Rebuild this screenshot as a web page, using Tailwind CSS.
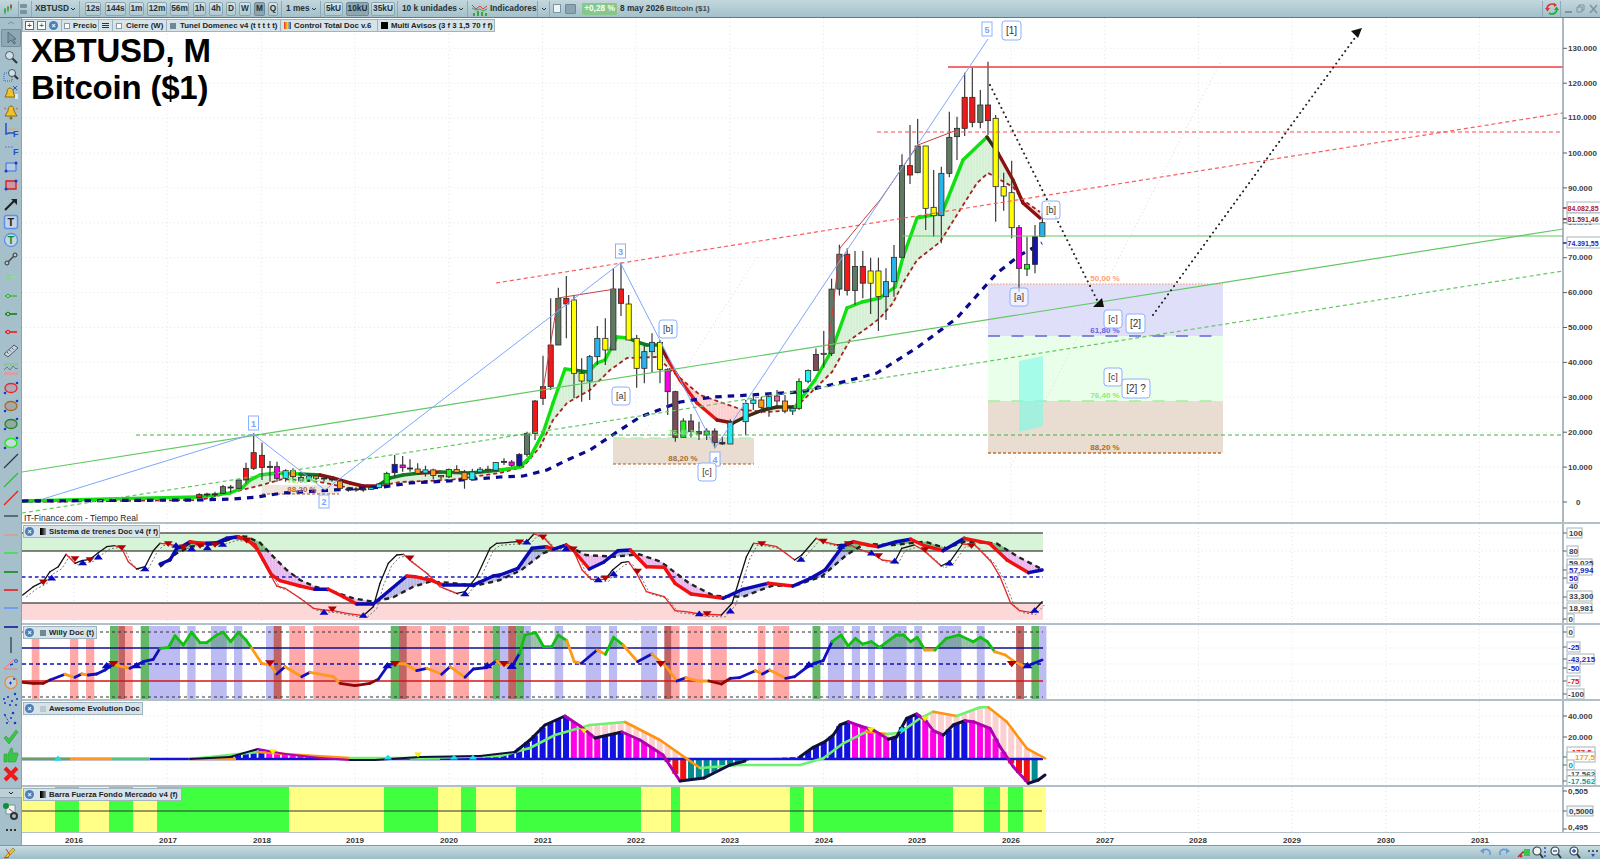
<!DOCTYPE html>
<html lang="es">
<head>
<meta charset="utf-8">
<title>XBTUSD, M</title>
<script src="https://cdn.jsdelivr.net/npm/@tailwindcss/browser@4"></script>
</head>
<body class="w-[1600px] h-[859px] overflow-hidden flex flex-col bg-white font-['Liberation_Sans',sans-serif] text-[#222]">

<!-- top toolbar -->
<header class="h-[18px] shrink-0 flex items-center bg-linear-to-b from-[#c3d7dd] to-[#a3c1cb] border-b border-[#5f7c8a] text-[8.3px] font-bold text-[#26323a] whitespace-nowrap">
  <svg class="ml-[4px] w-[10px] h-[12px]" viewBox="0 0 10 12"><path d="M1 5v6M4 3v6M7 1v6" stroke="#2a9a2a" stroke-width="1"/><path d="M0 6h2v3H0zM3 4h2v3H3z" fill="#3ab03a"/><path d="M6 2h2v3H6z" fill="#d04040"/></svg>
  <i class="w-px h-[16px] bg-[#8da9b5] ml-[4px]"></i>
  <span class="ml-[1px] w-[7px] h-[12px] flex flex-col gap-[2px] justify-center"><b class="block h-[4px] bg-[#7b929e] rounded-[1px]"></b><b class="block h-[4px] bg-[#7b929e] rounded-[1px]"></b></span>
  <i class="w-px h-[16px] bg-[#8da9b5] ml-[4px]"></i>
  <span class="ml-[3px] w-[32px]">XBTUSD</span>
  <svg class="ml-[3px] w-[6px] h-[4px]" viewBox="0 0 6 4"><path d="M1 1l2 2 2-2" fill="none" stroke="#333"/></svg>
  <i class="w-px h-[16px] bg-[#8da9b5] ml-[3px]"></i>
  <span class="ml-[5px] w-[16px] h-[14px] flex items-center justify-center border border-[#89a6b2] rounded-[2px] bg-linear-to-b from-[#d5e4e8] to-[#aec8d1]">12s</span>
  <span class="ml-[4px] w-[21px] h-[14px] flex items-center justify-center border border-[#89a6b2] rounded-[2px] bg-linear-to-b from-[#d5e4e8] to-[#aec8d1]">144s</span>
  <span class="ml-[3px] w-[15px] h-[14px] flex items-center justify-center border border-[#89a6b2] rounded-[2px] bg-linear-to-b from-[#d5e4e8] to-[#aec8d1]">1m</span>
  <span class="ml-[3px] w-[20px] h-[14px] flex items-center justify-center border border-[#89a6b2] rounded-[2px] bg-linear-to-b from-[#d5e4e8] to-[#aec8d1]">12m</span>
  <span class="ml-[3px] w-[19px] h-[14px] flex items-center justify-center border border-[#89a6b2] rounded-[2px] bg-linear-to-b from-[#d5e4e8] to-[#aec8d1]">56m</span>
  <span class="ml-[4px] w-[13px] h-[14px] flex items-center justify-center border border-[#89a6b2] rounded-[2px] bg-linear-to-b from-[#d5e4e8] to-[#aec8d1]">1h</span>
  <span class="ml-[3px] w-[14px] h-[14px] flex items-center justify-center border border-[#89a6b2] rounded-[2px] bg-linear-to-b from-[#d5e4e8] to-[#aec8d1]">4h</span>
  <span class="ml-[3px] w-[10px] h-[14px] flex items-center justify-center border border-[#89a6b2] rounded-[2px] bg-linear-to-b from-[#d5e4e8] to-[#aec8d1]">D</span>
  <span class="ml-[3px] w-[12px] h-[14px] flex items-center justify-center border border-[#89a6b2] rounded-[2px] bg-linear-to-b from-[#d5e4e8] to-[#aec8d1]">W</span>
  <span class="ml-[3px] w-[11px] h-[14px] flex items-center justify-center border border-[#6f8a96] rounded-[2px] bg-[#8ea6b0]">M</span>
  <span class="ml-[3px] w-[10px] h-[14px] flex items-center justify-center border border-[#89a6b2] rounded-[2px] bg-linear-to-b from-[#d5e4e8] to-[#aec8d1]">Q</span>
  <i class="w-px h-[16px] bg-[#8da9b5] ml-[3px]"></i>
  <span class="ml-[4px] w-[21px]">1 mes</span>
  <svg class="ml-[4px] w-[6px] h-[4px]" viewBox="0 0 6 4"><path d="M1 1l2 2 2-2" fill="none" stroke="#333"/></svg>
  <i class="w-px h-[16px] bg-[#8da9b5] ml-[3px]"></i>
  <span class="ml-[3px] w-[19px] h-[14px] flex items-center justify-center border border-[#89a6b2] rounded-[2px] bg-linear-to-b from-[#d5e4e8] to-[#aec8d1]">5kU</span>
  <span class="ml-[3px] w-[23px] h-[14px] flex items-center justify-center border border-[#6f8a96] rounded-[2px] bg-[#8ea6b0]">10kU</span>
  <span class="ml-[2px] w-[24px] h-[14px] flex items-center justify-center border border-[#89a6b2] rounded-[2px] bg-linear-to-b from-[#d5e4e8] to-[#aec8d1]">35kU</span>
  <i class="w-px h-[16px] bg-[#8da9b5] ml-[2px]"></i>
  <span class="ml-[4px] w-[53px]">10 k unidades</span>
  <svg class="ml-[3px] w-[6px] h-[4px]" viewBox="0 0 6 4"><path d="M1 1l2 2 2-2" fill="none" stroke="#333"/></svg>
  <i class="w-px h-[16px] bg-[#8da9b5] ml-[3px]"></i>
  <svg class="ml-[4px] w-[15px] h-[14px]" viewBox="0 0 15 14"><path d="M0 3l4 4 4-3 3 3 4-3" fill="none" stroke="#d04040"/><path d="M0 6l4 2 4-1 3 2 4-2" fill="none" stroke="#40a040"/><path d="M1 11h2v3H1zM5 9h2v5H5zM9 10h2v4H9zM13 11h2v3h-2z" fill="#3aa63a"/></svg>
  <span class="ml-[3px] w-[46px]">Indicadores</span>
  <i class="w-px h-[16px] bg-[#8da9b5] ml-[1px]"></i>
  <svg class="ml-[3px] w-[6px] h-[4px]" viewBox="0 0 6 4"><path d="M1 1l2 2 2-2" fill="none" stroke="#333"/></svg>
  <i class="w-px h-[16px] bg-[#8da9b5] ml-[2px]"></i>
  <span class="ml-[3px] w-[8px] h-[9px] bg-[#eef3f5] border border-[#7d95a1]"></span>
  <span class="ml-[4px] w-[11px] h-[10px] bg-[#8aa4b0] border border-[#6e8894] rounded-[1px]"></span>
  <span class="ml-[6px] w-[35px] h-[12px] flex items-center justify-center bg-[#86c78e] text-[#f6fff6] rounded-[1px]">+0,28 %</span>
  <span class="ml-[3px] w-[38px]">8 may 2026</span>
  <span class="ml-[8px] w-[40px] text-[8px] text-[#3c4c54]">Bitcoin ($1)</span>
  <i class="ml-auto w-px h-[16px] bg-[#8da9b5]"></i>
  <svg class="ml-[2px] w-[14px] h-[14px]" viewBox="0 0 14 14"><path d="M2 7a5 5 0 0 1 8-4" fill="none" stroke="#e03030" stroke-width="1.6"/><path d="M0 6h5L2.500 9.500zM9 1l3 2-3 2z" fill="#e03030"/><path d="M12 7a5 5 0 0 1-8 4" fill="none" stroke="#18b030" stroke-width="1.6"/><path d="M9 8h5l-2.500-3.500z" fill="#18b030"/></svg>
  <i class="ml-[1px] w-px h-[16px] bg-[#8da9b5]"></i>
  <svg class="ml-[3px] w-[36px] h-[12px]" viewBox="0 0 36 12"><path d="M1 9h7" stroke="#7f929b" stroke-width="2"/><path d="M13 4h5v5h-5zM15 4V2h5v5h-2" fill="none" stroke="#7f929b"/><path d="M26 2l7 8M33 2l-7 8" stroke="#7f929b" stroke-width="1.500"/></svg>
</header>

<div class="flex-1 flex min-h-0">
  <!-- left drawing tools -->
  <aside class="w-[22px] shrink-0 bg-[#a5bfcb] border-r border-[#8aa3af] flex flex-col items-center">
    <svg class="w-[8px] h-[11px] shrink-0" viewBox="0 0 8 11"><path d="M1 6l3-2 3 2" fill="none" stroke="#77909c"/></svg>
    <span class="h-[18.400px] w-[20px] shrink-0 flex items-center justify-center bg-[#8fa8b4] border border-[#74909c] rounded-[1px]"><svg class="w-4 h-4" viewBox="0 0 16 16"><path d="M5 2v11l3-3 3 4 1.500-1L10 9.500l3-.5z" fill="#7c98aa" stroke="#586e7c"/></svg></span>
    <span class="h-[18.400px] shrink-0 flex items-center"><svg class="w-4 h-4" viewBox="0 0 16 16"><circle cx="6.500" cy="6.500" r="4" fill="#cfe0e8" stroke="#4a5a64"/><path d="M9.500 9.500L14 14" stroke="#333" stroke-width="2"/></svg></span>
    <span class="h-[18.400px] shrink-0 flex items-center"><svg class="w-4 h-4" viewBox="0 0 16 16"><path d="M1 6h8v8H1z" fill="none" stroke="#3068d0" stroke-dasharray="1 1"/><circle cx="9" cy="6" r="3.500" fill="#cfe0e8" stroke="#4a5a64"/><path d="M11.500 8.500L15 12" stroke="#333" stroke-width="2"/></svg></span>
    <span class="h-[18.400px] shrink-0 flex items-center"><svg class="w-4 h-4" viewBox="0 0 16 16"><path d="M7 3C5 3 4 5 4 8l-2 4h10l-1.500-4c0-3-1.500-5-3.500-5z" fill="#f0c428" stroke="#8a6c10"/><path d="M10 1l4 4M14 1l-4 4" stroke="#2858c8"/><path d="M12 9h3v5h-3z" fill="#dfe8ec"/></svg></span>
    <span class="h-[18.400px] shrink-0 flex items-center"><svg class="w-4 h-4" viewBox="0 0 16 16"><path d="M8 2C6 2 5 4 5 7l-3 5h12l-3-5c0-3-1-5-3-5z" fill="#f0c428" stroke="#8a6c10"/><path d="M1 4l2 1M15 4l-2 1" stroke="#d06020"/><circle cx="8" cy="14" r="1.500" fill="#8a6c10"/></svg></span>
    <span class="h-[18.400px] shrink-0 flex items-center"><svg class="w-4 h-4" viewBox="0 0 16 16"><path d="M3 1v11l3-1h5" fill="none" stroke="#2050c8" stroke-width="1.500"/><path d="M5 7h9" stroke="#e8a060"/><text x="10" y="15" font-size="9" font-weight="700" fill="#2050c8">F</text></svg></span>
    <span class="h-[18.400px] shrink-0 flex items-center"><svg class="w-4 h-4" viewBox="0 0 16 16"><path d="M2 6h9" stroke="#7a90d8" stroke-width="1.500" stroke-dasharray="2 1"/><text x="10" y="14" font-size="9" font-weight="700" fill="#2050c8">F</text></svg></span>
    <span class="h-[18.400px] shrink-0 flex items-center"><svg class="w-4 h-4" viewBox="0 0 16 16"><path d="M3 4h10v8H3z" fill="#b4c8e8" stroke="#3870e0"/><circle cx="13" cy="4" r="1.500" fill="#1838c8"/><circle cx="3" cy="12" r="1.500" fill="#1838c8"/></svg></span>
    <span class="h-[18.400px] shrink-0 flex items-center"><svg class="w-4 h-4" viewBox="0 0 16 16"><path d="M3 4h10v8H3z" fill="#c89aa8" stroke="#e01818" stroke-width="1.300"/><circle cx="13" cy="4" r="1.500" fill="#1838c8"/><circle cx="3" cy="12" r="1.500" fill="#1838c8"/></svg></span>
    <span class="h-[18.400px] shrink-0 flex items-center"><svg class="w-4 h-4" viewBox="0 0 16 16"><path d="M2 14L11 5" stroke="#222" stroke-width="2.200"/><path d="M8 3h6v6z" fill="#222"/></svg></span>
    <span class="h-[18.400px] shrink-0 flex items-center"><svg class="w-4 h-4" viewBox="0 0 16 16"><rect x="1.500" y="1.500" width="13" height="13" rx="2" fill="#c4d4e4" stroke="#5c90e8" stroke-width="1.500"/><text x="4.500" y="12" font-size="11" font-weight="700" fill="#222">T</text></svg></span>
    <span class="h-[18.400px] shrink-0 flex items-center"><svg class="w-4 h-4" viewBox="0 0 16 16"><circle cx="8" cy="8" r="6.500" fill="#c4d8e4" stroke="#5c90e8" stroke-width="1.300"/><text x="4.500" y="12" font-size="11" font-weight="700" fill="#109030">T</text></svg></span>
    <span class="h-[18.400px] shrink-0 flex items-center"><svg class="w-4 h-4" viewBox="0 0 16 16"><path d="M4 12L12 4" stroke="#444" stroke-width="1.500"/><circle cx="4" cy="12" r="2" fill="#b8ccd6" stroke="#333"/><circle cx="12" cy="4" r="2" fill="#b8ccd6" stroke="#333"/></svg></span>
    <span class="h-[18.400px] shrink-0 flex items-center"><svg class="w-4 h-4" viewBox="0 0 16 16"><path d="M2 8h12" stroke="#80e880" stroke-width="1.500"/><circle cx="5" cy="8" r="1.800" fill="#a8d0c0" stroke="#70d870"/></svg></span>
    <span class="h-[18.400px] shrink-0 flex items-center"><svg class="w-4 h-4" viewBox="0 0 16 16"><path d="M2 8h12" stroke="#38c038" stroke-width="1.500"/><circle cx="5" cy="8" r="1.800" fill="#a8d0c0" stroke="#30b030"/></svg></span>
    <span class="h-[18.400px] shrink-0 flex items-center"><svg class="w-4 h-4" viewBox="0 0 16 16"><path d="M2 8h12" stroke="#0c7c0c" stroke-width="1.500"/><circle cx="5" cy="8" r="1.800" fill="#a8d0c0" stroke="#0c7c0c"/></svg></span>
    <span class="h-[18.400px] shrink-0 flex items-center"><svg class="w-4 h-4" viewBox="0 0 16 16"><path d="M2 8h12" stroke="#f01010" stroke-width="1.500"/><circle cx="5" cy="8" r="1.800" fill="#c0b0b8" stroke="#f01010"/></svg></span>
    <span class="h-[18.400px] shrink-0 flex items-center"><svg class="w-4 h-4" viewBox="0 0 16 16"><path d="M1 11L11 2l4 3L5 14z" fill="#c4d2da" stroke="#4c5c66"/><path d="M4 9l1.500 1.500M6.500 7L8 8.500M9 5l1.500 1.500" stroke="#4c5c66"/></svg></span>
    <span class="h-[18.400px] shrink-0 flex items-center"><svg class="w-4 h-4" viewBox="0 0 16 16"><path d="M1 2h14v3H1z" fill="#8ec898"/><path d="M1 11h14v3H1z" fill="#d8a0a4"/><path d="M1 9l3-3 3 3 3-4 3 3 2-1" fill="none" stroke="#647a88"/></svg></span>
    <span class="h-[18.400px] shrink-0 flex items-center"><svg class="w-4 h-4" viewBox="0 0 16 16"><ellipse cx="8" cy="8" rx="6" ry="4.500" fill="#b4a8b4" stroke="#e82828" stroke-width="1.300"/><circle cx="14" cy="3" r="1.300" fill="#1838c8"/><circle cx="2" cy="13" r="1.300" fill="#1838c8"/></svg></span>
    <span class="h-[18.400px] shrink-0 flex items-center"><svg class="w-4 h-4" viewBox="0 0 16 16"><ellipse cx="8" cy="8" rx="6" ry="4.500" fill="#a8a8a0" stroke="#a86828" stroke-width="1.300"/><circle cx="14" cy="3" r="1.300" fill="#1838c8"/><circle cx="2" cy="13" r="1.300" fill="#1838c8"/></svg></span>
    <span class="h-[18.400px] shrink-0 flex items-center"><svg class="w-4 h-4" viewBox="0 0 16 16"><ellipse cx="8" cy="8" rx="6" ry="4.500" fill="#94a8a4" stroke="#208820" stroke-width="1.300"/><circle cx="14" cy="3" r="1.300" fill="#1838c8"/><circle cx="2" cy="13" r="1.300" fill="#1838c8"/></svg></span>
    <span class="h-[18.400px] shrink-0 flex items-center"><svg class="w-4 h-4" viewBox="0 0 16 16"><ellipse cx="8" cy="8" rx="6" ry="4.500" fill="#c8d8dc" stroke="#18f018" stroke-width="1.500"/><circle cx="14" cy="3" r="1.300" fill="#1838c8"/><circle cx="2" cy="13" r="1.300" fill="#1838c8"/></svg></span>
    <span class="h-[18.400px] shrink-0 flex items-center"><svg class="w-4 h-4" viewBox="0 0 16 16"><path d="M1 15L15 1" stroke="#30383e" stroke-width="1.200"/></svg></span>
    <span class="h-[18.400px] shrink-0 flex items-center"><svg class="w-4 h-4" viewBox="0 0 16 16"><path d="M1 15L15 1" stroke="#38b838" stroke-width="1.300"/></svg></span>
    <span class="h-[18.400px] shrink-0 flex items-center"><svg class="w-4 h-4" viewBox="0 0 16 16"><path d="M1 15L15 1" stroke="#f01818" stroke-width="1.300"/></svg></span>
    <span class="h-[18.400px] shrink-0 flex items-center"><svg class="w-4 h-4" viewBox="0 0 16 16"><path d="M1 8h14" stroke="#2c3238" stroke-width="1.200"/></svg></span>
    <span class="h-[18.400px] shrink-0 flex items-center"><svg class="w-4 h-4" viewBox="0 0 16 16"><path d="M1 8h14" stroke="#f09080" stroke-width="1.300"/></svg></span>
    <span class="h-[18.400px] shrink-0 flex items-center"><svg class="w-4 h-4" viewBox="0 0 16 16"><path d="M1 8h14" stroke="#20f020" stroke-width="1.300"/></svg></span>
    <span class="h-[18.400px] shrink-0 flex items-center"><svg class="w-4 h-4" viewBox="0 0 16 16"><path d="M1 8h14" stroke="#0c820c" stroke-width="1.500"/></svg></span>
    <span class="h-[18.400px] shrink-0 flex items-center"><svg class="w-4 h-4" viewBox="0 0 16 16"><path d="M1 8h14" stroke="#f01010" stroke-width="1.500"/></svg></span>
    <span class="h-[18.400px] shrink-0 flex items-center"><svg class="w-4 h-4" viewBox="0 0 16 16"><path d="M1 8h14" stroke="#6090ff" stroke-width="1.500"/></svg></span>
    <span class="h-[18.400px] shrink-0 flex items-center"><svg class="w-4 h-4" viewBox="0 0 16 16"><path d="M1 8h14" stroke="#0c0c98" stroke-width="1.500"/></svg></span>
    <span class="h-[18.400px] shrink-0 flex items-center"><svg class="w-4 h-4" viewBox="0 0 16 16"><path d="M8 0v16" stroke="#2c3238" stroke-width="1.200"/></svg></span>
    <span class="h-[18.400px] shrink-0 flex items-center"><svg class="w-4 h-4" viewBox="0 0 16 16"><path d="M1 14h13M1 14L11 4" stroke="#e88080"/><path d="M7 10l3-1" stroke="#1838c8" stroke-width="1.500"/><circle cx="13" cy="6" r="1.500" fill="none" stroke="#2858c8"/></svg></span>
    <span class="h-[18.400px] shrink-0 flex items-center"><svg class="w-4 h-4" viewBox="0 0 16 16"><circle cx="8" cy="8.500" r="6" fill="#c0ccd4" stroke="#e88a40" stroke-width="1.200"/><path d="M6 9h3M7.500 7.500v3M10 5h2M11 4v2" stroke="#1838c8"/></svg></span>
    <span class="h-[18.400px] shrink-0 flex items-center"><svg class="w-[17px] h-[17px]" viewBox="0 0 17 17" fill="#1838c8"><circle cx="2" cy="7" r="1"/><circle cx="3" cy="11" r="1"/><circle cx="6" cy="5" r="1.100"/><circle cx="8" cy="13" r="1.100"/><circle cx="10" cy="9" r="1"/><circle cx="13" cy="2" r="1.200"/><circle cx="15" cy="7" r="1.100"/><circle cx="14" cy="13" r="1"/></svg></span>
    <span class="h-[18.400px] shrink-0 flex items-center"><svg class="w-[17px] h-[17px]" viewBox="0 0 17 17"><path d="M2 4l5 8" stroke="#1838c8" stroke-dasharray="1 1"/><g fill="#1838c8"><circle cx="3" cy="5" r="1"/><circle cx="11" cy="3" r="1.300"/><circle cx="5" cy="13" r="1.100"/><circle cx="13" cy="13" r="1.300"/><circle cx="9" cy="8" r="1"/></g></svg></span>
    <span class="h-[18.400px] shrink-0 flex items-center"><svg class="w-4 h-4" viewBox="0 0 16 16"><path d="M1 9l2-2 3 3 7-9 2 2-9 12z" fill="#38c848" stroke="#209030" stroke-width=".5"/></svg></span>
    <span class="h-[18.400px] shrink-0 flex items-center"><svg class="w-4 h-4" viewBox="0 0 16 16"><path d="M1 7h3v8H1zM5 7l3-6c2 0 2 2 1 5h5c2 0 1 3 0 4l-1 4c0 1-1 1-2 1H5z" fill="#38c848" stroke="#209030" stroke-width=".5"/></svg></span>
    <span class="h-[18.400px] shrink-0 flex items-center"><svg class="w-4 h-4" viewBox="0 0 16 16"><path d="M2 2l12 12M14 2L2 14" stroke="#f01818" stroke-width="4"/></svg></span>
    <span class="h-[10px] w-[22px] mt-[5px] shrink-0 flex items-center justify-center bg-[#bcd0d8] border-y border-[#8fa7b3]"><svg class="w-[6px] h-[4px]" viewBox="0 0 6 4"><path d="M1 1l2 2 2-2" fill="none" stroke="#222"/></svg></span>
    <span class="h-[18.400px] mt-[4px] shrink-0 flex items-center"><svg class="w-[18px] h-[18px]" viewBox="0 0 18 18"><path d="M4 3h9v9H4z" fill="#eef3f6" stroke="#77909c"/><circle cx="4" cy="4" r="3" fill="#128e32"/><path d="M7 7l6 4" stroke="#d03030"/><circle cx="12" cy="14" r="3" fill="none" stroke="#333" stroke-width="2"/></svg></span>
    <span class="h-[14px] mt-[3px] shrink-0 flex items-center gap-[2px]"><b class="w-[2px] h-[2px] bg-[#333] block"></b><b class="w-[2px] h-[2px] bg-[#333] block"></b><b class="w-[2px] h-[2px] bg-[#333] block"></b></span>
  </aside>

  <!-- chart panes -->
  <main class="flex-1 min-w-0 flex flex-col">
    <section class="relative h-[506px] shrink-0 border-b-2 border-[#b3bfc7]">
      <svg class="absolute inset-0 w-full h-full" viewBox="22 18 1578 504">
        <g id="p1"></g>
        <g class="text-[8px] font-bold" fill="#3a4248">
          <text x="1568" y="51">130.000</text><text x="1568" y="86">120.000</text><text x="1568" y="120">110.000</text><text x="1568" y="156">100.000</text><text x="1568" y="191">90.000</text><text x="1568" y="225">80.000</text><text x="1568" y="260">70.000</text><text x="1568" y="295">60.000</text><text x="1568" y="330">50.000</text><text x="1568" y="365">40.000</text><text x="1568" y="400">30.000</text><text x="1568" y="435">20.000</text><text x="1568" y="470">10.000</text><text x="1576" y="505">0</text>
          <rect x="1567" y="202" width="34" height="11" fill="#fff" stroke="#a4b4bc"/><text x="1567.500" y="211" fill="#b02424" class="text-[7px]">84.082,85</text>
          <rect x="1567" y="213" width="34" height="11" fill="#fff" stroke="#a4b4bc"/><text x="1567.500" y="222" fill="#8c2a18" class="text-[7px]">81.591,46</text>
          <rect x="1567" y="237" width="34" height="11" fill="#fff" stroke="#a4b4bc"/><text x="1567.500" y="246" fill="#2828b8" class="text-[7px]">74.391,55</text>
        </g>
        <g class="text-[8px] font-bold">
          <text x="1105" y="281" text-anchor="middle" fill="#ffa070">50,00 %</text>
          <text x="1105" y="333" text-anchor="middle" fill="#6464e0">61,80 %</text>
          <text x="1105" y="398" text-anchor="middle" fill="#80ee80">76,40 %</text>
          <text x="1105" y="450" text-anchor="middle" fill="#b06a28">88,20 %</text>
          <text x="683" y="435" text-anchor="middle" fill="#80ee80">76,40 %</text>
          <text x="683" y="461" text-anchor="middle" fill="#b06a28">88,20 %</text>
          <text x="302" y="483" text-anchor="middle" fill="#80ee80">76,40 %</text>
          <text x="302" y="492" text-anchor="middle" fill="#b06a28">88,20 %</text>
        </g>
        <g class="text-[9px] font-bold" fill="#78a2ff" text-anchor="middle">
          <rect x="248.500" y="416" width="10" height="14" fill="#fff" stroke="#8cb0ff"/><text x="253.500" y="426.500">1</text>
          <rect x="319" y="495" width="10" height="13" fill="#fff" stroke="#8cb0ff"/><text x="324" y="505">2</text>
          <rect x="615.500" y="244" width="10" height="14" fill="#fff" stroke="#8cb0ff"/><text x="620.500" y="254.500">3</text>
          <rect x="710" y="452" width="10" height="14" fill="#fff" stroke="#8cb0ff"/><text x="715" y="462.500">4</text>
          <rect x="982" y="22" width="10" height="14" fill="#fff" stroke="#8cb0ff"/><text x="987" y="32.500">5</text>
        </g>
        <g class="text-[9px]" fill="#333" text-anchor="middle">
          <rect x="1002" y="21" width="19" height="19" rx="3" fill="#fff" stroke="#8cb0ff"/><text x="1011.500" y="34" class="text-[10px]">[1]</text>
          <rect x="612" y="387" width="18" height="18" rx="3" fill="#fff" stroke="#8cb0ff"/><text x="621" y="399">[a]</text>
          <rect x="659" y="320" width="18" height="18" rx="3" fill="#fff" stroke="#8cb0ff"/><text x="668" y="332">[b]</text>
          <rect x="698" y="463" width="18" height="18" rx="3" fill="#fff" stroke="#8cb0ff"/><text x="707" y="475">[c]</text>
          <rect x="1010" y="288" width="18" height="18" rx="3" fill="#fff" fill-opacity=".6" stroke="#8cb0ff"/><text x="1019" y="300">[a]</text>
          <rect x="1042" y="201" width="18" height="18" rx="3" fill="#fff" fill-opacity=".8" stroke="#8cb0ff"/><text x="1051" y="213">[b]</text>
          <rect x="1104" y="310" width="18" height="18" rx="3" fill="#fff" stroke="#8cb0ff"/><text x="1113" y="322">[c]</text>
          <rect x="1126" y="314" width="19" height="19" rx="3" fill="#fff" stroke="#8cb0ff"/><text x="1135.500" y="327" class="text-[10px]">[2]</text>
          <rect x="1104" y="368" width="18" height="18" rx="3" fill="#fff" stroke="#8cb0ff"/><text x="1113" y="380">[c]</text>
          <rect x="1122" y="379" width="28" height="19" rx="3" fill="#fff" stroke="#8cb0ff"/><text x="1136" y="392" class="text-[10px]">[2] ?</text>
        </g>
        <text x="24" y="521" class="text-[8.500px]" fill="#222">IT-Finance.com - Tiempo Real</text>
      </svg>
      <div class="absolute left-[9px] top-[14px] text-[33px] leading-[37px] font-bold text-black tracking-[-0.2px]">XBTUSD, M<br>Bitcoin ($1)</div>
      <div class="absolute left-0 top-[1px] flex items-center h-[13px] text-[7.800px] font-bold whitespace-nowrap">
        <span class="h-[13px] w-[40px] flex items-center gap-[3px] px-[2px] bg-[#d6e4ea] border border-[#9fb4be]">
          <b class="shrink-0 w-[9px] h-[9px] bg-white border border-[#c04040] text-[#e01818] flex items-center justify-center leading-none">+</b>
          <b class="shrink-0 w-[9px] h-[9px] bg-white border border-[#40a040] text-[#10a020] flex items-center justify-center leading-none">+</b>
          <b class="shrink-0 w-[9px] h-[9px] rounded-full bg-[#4e7eb8] text-white text-[7px] flex items-center justify-center leading-none">×</b>
        </span>
        <span class="h-[13px] w-[37px] flex items-center gap-[3px] px-[2px] bg-[#d6e4ea] border border-l-0 border-[#9fb4be]"><b class="shrink-0 w-[6px] h-[6px] bg-white border border-[#8a9aa4]"></b>Precio</span>
        <span class="h-[13px] w-[14px] flex flex-col items-center justify-center gap-[1px] bg-[#d6e4ea] border border-l-0 border-[#9fb4be]"><b class="w-[7px] h-px bg-[#334]"></b><b class="w-[7px] h-px bg-[#334]"></b><b class="w-[7px] h-px bg-[#334]"></b></span>
        <span class="h-[13px] w-[54px] flex items-center gap-[4px] px-[3px] bg-[#d6e4ea] border border-l-0 border-[#9fb4be]"><b class="shrink-0 w-[6px] h-[6px] bg-white border border-[#8a9aa4]"></b>Cierre (W)</span>
        <span class="h-[13px] w-[114px] flex items-center gap-[4px] px-[3px] bg-[#d6e4ea] border border-l-0 border-[#9fb4be]"><b class="shrink-0 w-[6px] h-[6px] bg-[#6f8894]"></b>Tunel Domenec v4 (t t t t t)</span>
        <span class="h-[13px] w-[97px] flex items-center gap-[3px] px-[3px] bg-[#d6e4ea] border border-l-0 border-[#9fb4be]"><b class="shrink-0 w-[7px] h-[7px] bg-linear-to-r from-[#e02020] via-[#f0d020] to-[#2040c0]"></b>Control Total Doc v.6</span>
        <span class="h-[13px] w-[117px] flex items-center gap-[3px] px-[3px] bg-[#d6e4ea] border border-l-0 border-[#9fb4be]"><b class="shrink-0 w-[7px] h-[7px] bg-black"></b>Multi Avisos (3 f 3 1,5 70 f f)</span>
      </div>
    </section>

    <section class="relative h-[101px] shrink-0 border-b-2 border-[#b3bfc7]">
      <svg class="absolute inset-0 w-full h-full" viewBox="22 524 1578 99">
        <g id="p2"></g>
        <g class="text-[8px] font-bold" fill="#3a4248">
          <rect x="1567" y="528" width="15" height="10" fill="#fff" stroke="#a4b4bc"/><text x="1569" y="536">100</text>
          <rect x="1567" y="546" width="11" height="10" fill="#fff" stroke="#a4b4bc"/><text x="1569" y="554">80</text>
          <rect x="1567" y="559" width="25" height="9" fill="#fff" stroke="#a4b4bc"/><text x="1569" y="566">59,025</text>
          <rect x="1567" y="565" width="25" height="10" fill="#fff" stroke="#a4b4bc"/><text x="1569" y="573" fill="#2828b8">57,994</text>
          <rect x="1567" y="573" width="11" height="10" fill="#fff" stroke="#a4b4bc"/><text x="1569" y="581" fill="#2828b8">50</text>
          <text x="1569" y="589">40</text>
          <rect x="1567" y="591" width="25" height="10" fill="#fff" stroke="#a4b4bc"/><text x="1569" y="599">33,300</text>
          <rect x="1567" y="603" width="25" height="10" fill="#fff" stroke="#a4b4bc"/><text x="1569" y="611">18,981</text>
          <rect x="1567" y="614" width="7" height="10" fill="#fff" stroke="#a4b4bc"/><text x="1568.500" y="622">0</text>
        </g>
      </svg>
      <div class="absolute left-[1px] top-[1px] w-[137px] h-[13px] flex items-center gap-[3px] px-[1px] bg-[#d6e4ea] border border-[#9fb4be] text-[7.800px] font-bold whitespace-nowrap">
        <b class="shrink-0 w-[9px] h-[9px] rounded-full bg-[#4e7eb8] text-white text-[7px] flex items-center justify-center leading-none">×</b><b class="shrink-0 ml-[3px] w-[6px] h-[7px] bg-linear-to-r from-black to-[#999]"></b>Sistema de trenes Doc v4 (f f)
      </div>
    </section>

    <section class="relative h-[76px] shrink-0 border-b-2 border-[#b3bfc7]">
      <svg class="absolute inset-0 w-full h-full" viewBox="22 625 1578 74">
        <g id="p3"></g>
        <g class="text-[8px] font-bold" fill="#3a4248">
          <rect x="1567" y="627" width="7" height="10" fill="#fff" stroke="#a4b4bc"/><text x="1568.500" y="635">0</text>
          <rect x="1567" y="642" width="13" height="10" fill="#fff" stroke="#a4b4bc"/><text x="1568" y="650" fill="#2828b8">-25</text>
          <rect x="1567" y="654" width="27" height="10" fill="#fff" stroke="#a4b4bc"/><text x="1568" y="662" fill="#2828b8">-43,215</text>
          <rect x="1567" y="663" width="13" height="10" fill="#fff" stroke="#a4b4bc"/><text x="1568" y="671" fill="#2828b8">-50</text>
          <rect x="1567" y="676" width="13" height="10" fill="#fff" stroke="#a4b4bc"/><text x="1568" y="684" fill="#e01818">-75</text>
          <rect x="1567" y="689" width="17" height="10" fill="#fff" stroke="#a4b4bc"/><text x="1568" y="697">-100</text>
        </g>
      </svg>
      <div class="absolute left-[1px] top-[1px] w-[74px] h-[13px] flex items-center gap-[3px] px-[1px] bg-[#d6e4ea] border border-[#9fb4be] text-[7.800px] font-bold whitespace-nowrap">
        <b class="shrink-0 w-[9px] h-[9px] rounded-full bg-[#4e7eb8] text-white text-[7px] flex items-center justify-center leading-none">×</b><b class="shrink-0 ml-[3px] w-[6px] h-[6px] bg-[#6f8894]"></b>Willy Doc (t)
      </div>
    </section>

    <section class="relative h-[86px] shrink-0 border-b-2 border-[#b3bfc7]">
      <svg class="absolute inset-0 w-full h-full" viewBox="22 701 1578 84">
        <g id="p4"></g>
        <g class="text-[8px] font-bold" fill="#3a4248">
          <text x="1568" y="719">40.000</text>
          <text x="1568" y="740">20.000</text>
          <rect x="1567" y="747" width="28" height="10" fill="#fff" stroke="#a4b4bc"/><text x="1569" y="755" fill="#e01818">-177,5</text>
          <rect x="1567" y="752" width="28" height="10" fill="#fff" stroke="#a4b4bc"/><text x="1575" y="760" fill="#ff9a18">177,5</text>
          <rect x="1567" y="760" width="7" height="10" fill="#fff" stroke="#a4b4bc"/><text x="1568.500" y="768" fill="#10a0a0">0</text>
          <rect x="1567" y="770" width="28" height="9" fill="#fff" stroke="#a4b4bc"/><text x="1568" y="777" fill="#40585a">-17.562</text>
          <rect x="1567" y="776" width="28" height="10" fill="#fff" stroke="#a4b4bc"/><text x="1568" y="784" fill="#10a0a0">-17.562</text>
        </g>
      </svg>
      <div class="absolute left-[1px] top-[1px] w-[120px] h-[13px] flex items-center gap-[3px] px-[1px] bg-[#d6e4ea] border border-[#9fb4be] text-[7.800px] font-bold whitespace-nowrap">
        <b class="shrink-0 w-[9px] h-[9px] rounded-full bg-[#4e7eb8] text-white text-[7px] flex items-center justify-center leading-none">×</b><b class="shrink-0 ml-[3px] w-[6px] h-[6px] bg-[#bcc8ce]"></b>Awesome Evolution Doc
      </div>
    </section>

    <section class="relative h-[46px] shrink-0 border-b border-[#b3bfc7]">
      <svg class="absolute inset-0 w-full h-full" viewBox="22 787 1578 45">
        <g id="p5"></g>
        <g class="text-[8px] font-bold" fill="#3a4248">
          <text x="1568" y="794">0,505</text>
          <rect x="1567" y="806" width="26" height="10" fill="#f2f4f5" stroke="#a4b4bc"/><text x="1569" y="814">0,5000</text>
          <text x="1568" y="830">0,495</text>
        </g>
      </svg>
      <div class="absolute left-[1px] top-[1px] w-[159px] h-[13px] flex items-center gap-[3px] px-[1px] bg-[#d6e4ea] border border-[#9fb4be] text-[7.800px] font-bold whitespace-nowrap">
        <b class="shrink-0 w-[9px] h-[9px] rounded-full bg-[#4e7eb8] text-white text-[7px] flex items-center justify-center leading-none">×</b><b class="shrink-0 ml-[3px] w-[6px] h-[7px] bg-linear-to-r from-black to-[#999]"></b>Barra Fuerza Fondo Mercado v4 (f)
      </div>
    </section>

    <div class="relative flex-1 min-h-0">
      <svg class="absolute inset-0 w-full h-full" viewBox="22 833 1578 12">
        <g class="text-[8px] font-bold" fill="#333" text-anchor="middle">
          <text x="74" y="843">2016</text><text x="168" y="843">2017</text><text x="262" y="843">2018</text><text x="355" y="843">2019</text><text x="449" y="843">2020</text><text x="543" y="843">2021</text><text x="636" y="843">2022</text><text x="730" y="843">2023</text><text x="824" y="843">2024</text><text x="917" y="843">2025</text><text x="1011" y="843">2026</text><text x="1105" y="843">2027</text><text x="1198" y="843">2028</text><text x="1292" y="843">2029</text><text x="1386" y="843">2030</text><text x="1480" y="843">2031</text>
        </g>
      </svg>
    </div>
  </main>
</div>

<!-- bottom toolbar -->
<footer class="h-[14px] shrink-0 flex items-center bg-linear-to-b from-[#c8dde3] to-[#9dbcc6] border-t border-[#7d98a4]">
  <svg class="ml-[3px] w-[14px] h-[13px]" viewBox="0 0 14 13"><path d="M2 11L10 2l2 2-8 8z" fill="#f0c828" stroke="#806a10" stroke-width=".6"/><path d="M1 12l5-1M3 3l4 6" stroke="#d03030"/></svg>
  <svg class="ml-auto w-[118px] h-[13px] mr-[2px]" viewBox="0 0 118 13">
    <path d="M3 5a4 4 0 0 1 7 1v3" fill="none" stroke="#6e9ad8" stroke-width="1.800"/><path d="M0 5l4-3v6z" fill="#6e9ad8"/>
    <path d="M27 5a4 4 0 0 0-7 1v3" fill="none" stroke="#6e9ad8" stroke-width="1.800"/><path d="M30 5l-4-3v6z" fill="#6e9ad8"/>
    <path d="M38 11l5-5 3 2 3-3" fill="none" stroke="#c03030" stroke-width="1.500"/><path d="M44 3h6v7h-6z" fill="#38c848"/><circle cx="41" cy="10" r="1.500" fill="#c03030"/>
    <circle cx="57" cy="5" r="4" fill="#eef4f6" stroke="#39434a" stroke-width="1.200"/><path d="M60 8l3 4" stroke="#333" stroke-width="1.800"/><path d="M65 1v2M65 5v2M65 9v2" stroke="#2050c8" stroke-width="1.500"/>
    <circle cx="75" cy="5" r="4" fill="#eef4f6" stroke="#39434a" stroke-width="1.200"/><path d="M78 8l3 4" stroke="#333" stroke-width="1.800"/><path d="M73 5h4" stroke="#2050c8" stroke-width="1.300"/>
    <circle cx="94" cy="5" r="4" fill="#eef4f6" stroke="#39434a" stroke-width="1.200"/><path d="M97 8l3 4" stroke="#333" stroke-width="1.800"/><path d="M92 5h4M94 3v4" stroke="#2050c8" stroke-width="1.300"/>
    <path d="M108 5h2M112 5h2M116 5h2" stroke="#333" stroke-width="1.500"/><path d="M111 8h4l-2 3z" fill="#2050c8"/>
  </svg>
</footer>

<script>
const X=(yr,m=0)=>1011+(yr-2026)*93.7+m*7.81;
const YEARS=[2016,2017,2018,2019,2020,2021,2022,2023,2024,2025,2026,2027,2028,2029,2030,2031].map(y=>X(y));
const LEFT=22,RIGHT=1563,END=1046;
const COL={g:'#5f7a63',r:'#f01818',y:'#ffff00',c:'#28b4ea',a:'#20eef0',m:'#ff00e0',l:'#22ee22',n:'#1515a8',o:'#ff9a18',b:'#7c4c58',p:'#f060a8',k:'#333333'};
const z8=p=>p.map(q=>[q[0]/3,520+q[1]/3]);
const z12=p=>p.map(q=>[500+q[0]/2.8,520+q[1]/3]);
const z9=p=>p.map(q=>[800+q[0]/3,690+q[1]/3]);
const interp=(P,x)=>{if(x<=P[0][0])return P[0][1];for(let i=1;i<P.length;i++){if(x<=P[i][0]){const a=P[i-1],b=P[i];return a[1]+(b[1]-a[1])*(x-a[0])/(b[0]-a[0]||1);}}return P[P.length-1][1];};
const line=(a,b,c,d,s,w,extra='')=>`<line x1="${a}" y1="${b}" x2="${c}" y2="${d}" stroke="${s}" stroke-width="${w}" ${extra}/>`;
const poly=(P,s,w,extra='')=>`<polyline points="${P.map(q=>q[0].toFixed(1)+','+q[1].toFixed(1)).join(' ')}" fill="none" stroke="${s}" stroke-width="${w}" stroke-linejoin="round" ${extra}/>`;
const rect=(x,y,w,h,f,extra='')=>`<rect x="${x}" y="${y}" width="${w}" height="${h}" fill="${f}" ${extra}/>`;
const segs=(P,fn,w)=>{let s='';for(let i=1;i<P.length;i++){s+=line(P[i-1][0].toFixed(1),P[i-1][1].toFixed(1),P[i][0].toFixed(1),P[i][1].toFixed(1),fn(P[i-1],P[i]),w,'stroke-linecap="round"');}return s;};
const fillB=(A,B,up,dn,x0,x1)=>{let s='';for(let x=x0;x<x1;x+=1.5){const a=interp(A,x),b=interp(B,x);s+=rect(x,Math.min(a,b).toFixed(1),1.6,Math.abs(a-b).toFixed(1),a<b?up:dn);}return s;};
const tri=(x,y,up,c,r=4.5)=>{const h=r*1.25;return `<polygon points="${up?`${x-r},${y+h/2} ${x+r},${y+h/2} ${x},${y-h/2}`:`${x-r},${y-h/2} ${x+r},${y-h/2} ${x},${y+h/2}`}" fill="${c}"/>`;};
const grid=(ys,y0,y1)=>{let s='';YEARS.forEach(x=>s+=line(x,y0,x,y1,'#e2e4e6',1,'stroke-dasharray="1 3"'));ys.forEach(y=>s+=line(LEFT,y,RIGHT,y,'#e2e4e6',1,'stroke-dasharray="1 3"'));return s;};
const axis=(ys,y0,y1,c='#55626b')=>{let s=line(RIGHT,y0,RIGHT,y1,'#8a9ba6',1.4);ys.forEach(y=>s+=line(RIGHT,y,RIGHT+4,y,c,1));return s;};

/* main pane */
const PY=v=>502-v*3.49;
const ticks1=[130,120,110,100,90,80,70,60,50,40,30,20,10,0].map(PY);
let h=grid(ticks1,18,524);
/* fibonacci boxes */
h+=rect(988,284,235,52,'#dfdff9')+rect(988,336,235,65,'#eaffea')+rect(988,401,235,52,'#e9ddd1');
h+=rect(613,438,141,26,'#e9ddd1');
h+=rect(262,485,77,9,'#f0e6dc');
h+=line(988,284,1223,284,'#ffb088',1.4,'stroke-dasharray="1.5 1.5"');
h+=line(988,336,1218,336,'#6464d8',1.6,'stroke-dasharray="12 11.500"');
h+=line(988,401,1218,401,'#a0f0a0',1.6,'stroke-dasharray="12 11.500"');
h+=line(988,453,1223,453,'#c07030',1.4,'stroke-dasharray="3 2"');
h+=line(613,438,754,438,'#b8f0b8',1.4,'stroke-dasharray="12 6"');
h+=line(613,464,754,464,'#a85a20',1.2,'stroke-dasharray="3 2"');
h+=line(262,494,339,494,'#a85a20',1,'stroke-dasharray="3 2"');
/* faint diagonals */
h+=line(1220,63,1010,468,'#d6d8da',1,'stroke-dasharray="1 3"');
h+=line(757,257,620,470,'#d6d8da',1,'stroke-dasharray="1 3"');
h+=line(333,457,287,497,'#d6d8da',1,'stroke-dasharray="1 3"');
/* tunnel */
const gB='#10e010',gD='#0f7a20',rD='#8c1010',rR='#e01818',br='#3a2c10';
const fast=[[22,501,gB],[197,497,gB],[230,493,gB],[242,488,gB],[250,480,gB],[260,475,gB],[277,473,gB],[300,474,gB],[320,475,gD],[333,478,rD],[350,483,rD],[363,486,rD],[377,486,rD],[390,478,gD],[403,475,gD],[420,473,gD],[440,472,rD],[470,473,gD],[500,470,gD],[520,467,gB],[530,457,gB],[543,433,gB],[553,403,gB],[565,369,gB],[573,370,gB],[588,372,gD],[597,363,gB],[605,360,gB],[617,337,gB],[628,338,gB],[637,342,gD],[647,345,gD],[660,345,gD],[668,360,rD],[680,380,rR],[697,403,rR],[717,420,rR],[733,423,rD],[745,417,br],[763,410,br],[777,407,br],[795,407,br],[800,400,gB],[815,380,gB],[832,350,gB],[847,308,gB],[862,302,gB],[880,298,gB],[895,287,gB],[903,257,gB],[917,218,gB],[942,213,gB],[963,160,gB],[987,137,gB],[998,153,br],[1013,180,rD],[1023,203,rD],[1040,218,rD]];
const slow=[[22,502],[200,500],[233,492],[258,486],[283,479],[320,482],[360,490],[400,482],[450,480],[500,473],[523,467],[540,447],[553,420],[567,403],[590,390],[610,370],[627,358],[657,357],[673,372],[700,395],[723,403],[743,410],[767,412],[793,410],[832,372],[850,340],[867,328],[880,318],[893,303],[903,283],[917,260],[940,242],[960,210],[977,183],[988,173],[1013,187],[1023,200],[1040,212]];
h+=fillB(fast.map(q=>[q[0],q[1]]),slow,'#d6f0d6','#fdd0d0',200,1040);
h+=poly(slow,'#a82020',1.8,'stroke-dasharray="4 3"');
for(let i=1;i<fast.length;i++)h+=line(fast[i-1][0],fast[i-1][1],fast[i][0],fast[i][1],fast[i][2],3.4,'stroke-linecap="round"');
/* candles: [x,wickTop,bodyTop,bodyBottom,wickBottom,colour] */
const candles=[];
const addZ=(rows,fx,fy)=>rows.forEach(r=>candles.push([fx(r[0]),fy(r[1]),fy(r[2]),fy(r[3]),fy(r[4]),r[5]]));
addZ([[598,280,283,293,295,'r'],[621,278,282,284,290,'k'],[645,275,282,284,292,'k'],[669,255,260,280,282,'g'],[692,255,261,263,278,'k'],[716,238,240,265,266,'g'],[738,188,205,240,250,'r'],[761,100,158,205,210,'r'],[786,128,166,202,240,'r'],[810,183,199,201,245,'k'],[831,185,200,235,245,'m'],[857,208,212,235,245,'a'],[879,205,212,230,245,'o'],[903,225,232,243,248,'g'],[927,222,228,240,245,'a'],[948,225,228,235,240,'o'],[972,228,234,236,245,'k'],[996,232,237,239,245,'k'],[1020,235,243,265,272,'o'],[1045,262,267,269,275,'k'],[1068,262,267,269,275,'k'],[1090,262,267,269,275,'k'],[1113,260,263,268,270,'a'],[1137,250,252,263,265,'a'],[1160,215,220,252,255,'l'],[1184,165,193,218,230,'n'],[1208,168,195,203,215,'m'],[1230,178,204,206,215,'k'],[1253,190,207,220,225,'o']],z=>z/3,z=>400+z/3);
addZ([[12,655,664,666,675,'k'],[35,660,666,676,680,'m'],[58,640,643,677,680,'n'],[81,575,580,643,650,'g'],[105,480,483,580,600,'r'],[129,347,440,475,495,'r'],[152,175,315,440,450,'r'],[175,143,175,315,315,'g'],[199,108,175,192,295,'r'],[222,165,180,400,475,'y'],[245,355,400,423,485,'y'],[269,345,350,423,480,'c'],[292,258,295,350,375,'c'],[316,235,295,330,375,'y'],[340,85,147,330,330,'g'],[363,68,147,190,228,'r'],[386,165,192,300,300,'y'],[410,285,295,385,443,'y'],[433,315,335,385,430,'c'],[456,280,307,335,397,'c'],[480,300,307,388,430,'y'],[503,385,388,455,525,'m'],[526,452,455,592,605,'b'],[550,535,543,592,592,'l'],[573,522,543,575,592,'b'],[597,545,575,582,600,'b'],[620,565,573,585,600,'l'],[644,565,573,608,625,'b'],[667,590,607,612,615,'k'],[691,538,547,612,612,'a'],[737,480,490,545,585,'a'],[760,465,480,490,510,'a'],[784,470,480,502,520,'o'],[807,460,470,502,530,'a'],[831,450,468,483,500,'p'],[855,465,483,513,520,'o'],[878,495,505,513,525,'a'],[897,415,425,505,510,'l']],z=>500+z/3,z=>240+z/3);
const addP=(m,o,hi,lo,c,col)=>candles.push([X(2016,m),PY(hi),PY(Math.max(o,c)),PY(Math.min(o,c)),PY(lo),col]);
[[45,8.3,10.4,7.3,9.2,'a'],[46,9.2,9.5,6.5,7.6,'o'],[47,7.6,7.7,6.4,7.2,'o'],[48,7.2,9.6,6.9,9.3,'l'],[49,9.3,10.5,8.4,8.5,'o'],[50,8.5,9.2,3.8,6.4,'o'],[51,6.4,9.5,6.2,8.6,'a'],[52,8.6,10,8.2,9.4,'a'],[53,9.4,10.4,8.9,9.1,'o'],[54,9.1,11.4,9,11.3,'a'],
 [94,34.6,38,34,37.7,'a'],[95,37.7,44,37.6,42.3,'b'],[96,42.3,49,38.5,42.6,'y'],[97,42.6,64,41.8,61,'g'],[98,61,73.700,59.2,71,'g'],[99,71,72.700,59.2,60.6,'r'],[100,60.6,71.900,56.5,67.5,'g'],[101,67.5,71.900,58.4,62.7,'r'],[102,62.7,70,53.9,66.2,'y'],[103,66.2,70,49,58.9,'y']].forEach(r=>addP(...r));
addZ([[18,745,785,830,900,'c'],[42,675,712,785,830,'c'],[66,403,437,712,712,'g'],[90,315,437,465,492,'r'],[113,297,378,458,460,'g'],[137,378,378,565,630,'y'],[161,450,562,587,650,'y'],[184,440,460,587,670,'c'],[208,275,352,460,472,'g'],[231,290,325,350,420,'g'],[254,158,232,325,348,'r'],[277,143,232,307,322,'r'],[301,210,255,307,325,'g'],[324,125,255,302,345,'r'],[347,285,295,500,605,'y'],[371,458,500,528,572,'y'],[395,422,518,623,655,'y'],[417,615,623,745,815,'m'],[441,650,733,747,768,'l'],[465,615,650,733,760,'n'],[487,580,608,650,650,'c']],z=>880+z/3,z=>20+z/3);
const dashMain=[[22,501],[200,500],[233,499],[257,497],[283,493],[317,491],[350,489],[383,487],[410,483],[449,481],[500,477],[523,476],[547,470],[567,460],[590,450],[617,432],[640,417],[680,402],[713,397],[750,395],[800,392],[826,386],[847,381],[877,373],[918,347],[957,318],[980,292],[997,273],[1020,255],[1035,247],[1042,243]];
h+=poly(dashMain,'#0a0a90',3.2,'stroke-dasharray="6.5 6"');
candles.forEach(c=>{h+=line(c[0],c[1],c[0],c[4],'#3a3a3a',1.2);h+=rect(c[0]-2.6,c[2],5.2,Math.max(c[3]-c[2],1),COL[c[5]],'stroke="#2a2a2a" stroke-width=".8"');});
/* trend lines */
h+=line(22,472,RIGHT,229,'#62c862',1.2);
h+=line(902,236,RIGHT,236,'#62c862',1.2);
h+=line(22,513,RIGHT,271,'#62c862',1.2,'stroke-dasharray="4 3"');
h+=line(136,435,RIGHT,435,'#3cb43c',1.1,'stroke-dasharray="4 3"');
h+=line(496,283,RIGHT,113,'#ff5a5a',1.2,'stroke-dasharray="4 3"');
h+=line(877,132,RIGHT,132,'#ff4a4a',1.2,'stroke-dasharray="4 3"');
h+=line(948,67,RIGHT,67,'#f03c3c',1.3);
h+=poly([[543,390],[558,298],[615,289]],'#c84040',1);
h+=poly([[828,350],[840,248],[880,200],[918,145],[957,130]],'#c84040',1);
h+=poly([[43,499],[253,434],[325,490],[620.5,263],[715,448],[988,39]],'#7ea6ff',1);
/* projection arrows */
h+=line(990,85,1098,302,'#222',2,'stroke-dasharray=".1 5" stroke-linecap="round"');
h+=`<polygon points="1104,307 1093,307 1102,298" fill="#111"/>`;
h+=line(1153,315,1357,35,'#222',2,'stroke-dasharray=".1 5" stroke-linecap="round"');
h+=`<polygon points="1362,28 1351,31 1358,38" fill="#111"/>`;
/* cyan rectangle */
h+=`<polygon points="1019,361 1043,356 1043,426 1019,432" fill="#7ffbe6" fill-opacity=".65"/>`;
h+=axis(ticks1,18,524);
h+=line(RIGHT,208,RIGHT+4,208,'#b02424',1.6)+line(RIGHT,219,RIGHT+4,219,'#8c2a18',1.6)+line(RIGHT,243,RIGHT+4,243,'#2828b8',1.6);
document.getElementById('p1').innerHTML=h;

/* pane 2: trend system */
let s=grid([533,551,577,603,619],524,625);
const thin=z8([[68,225],[100,200],[130,185],[150,155],[175,140],[198,103],[225,130],[245,122],[270,118],[295,98],[320,80],[345,77],[365,85],[385,125],[410,147],[435,140],[460,92],[480,70],[505,72],[530,78],[555,80],[575,68],[600,72],[620,68],[645,72],[670,65],[700,55],[740,60],[770,90],[800,145],[830,198],[855,205],[900,235],[940,265],[970,270],[1000,272],[1040,280],[1090,287],[1120,260],[1140,190],[1165,130],[1190,105],[1210,103],[1235,125],[1280,160],[1320,200],[1370,220],[1395,215],[1430,170],[1470,85],[1490,70]]).concat(z12([[50,65],[75,65],[95,42],[120,50],[150,85],[185,72],[205,90],[230,150],[255,178],[295,178],[315,150],[340,128],[360,125],[385,165],[410,215],[460,230],[490,272],[520,275],[560,282],[620,285],[650,250],[690,110],[710,70],[735,72],[775,80],[800,100],[825,120],[845,105],[885,55],[905,65],[945,75],[975,72],[1000,85],[1040,100],[1070,120],[1105,125],[1125,85],[1160,75],[1185,90],[1235,138],[1260,125],[1295,72],[1330,75],[1375,125],[1400,170],[1430,250],[1455,272],[1490,278],[1518,245]]));
const thick=z8([[480,132],[510,120],[530,85],[545,80],[570,65],[590,68],[620,70],[650,68],[680,55],[715,50],[740,60],[765,75],[790,120],[815,165],[840,182],[900,198],[945,208],[985,208],[1030,230],[1070,252],[1120,252],[1170,210],[1220,168],[1245,170],[1290,180],[1330,195],[1395,195],[1420,195],[1480,168]]).concat(z12([[0,165],[50,145],[90,85],[130,80],[150,88],[185,75],[205,90],[250,147],[290,127],[330,92],[365,90],[410,140],[460,142],[490,190],[535,222],[625,235],[680,208],[750,190],[820,198],[870,175],[910,150],[960,78],[990,65],[1030,75],[1060,80],[1110,65],[1150,58],[1190,78],[1240,92],[1300,55],[1370,70],[1420,120],[1480,158],[1518,150]]));
const dsh=z8([[480,140],[530,100],[570,80],[650,72],[715,48],[740,50],[780,68],[820,110],[860,150],[900,180],[945,200],[1000,215],[1060,235],[1120,245],[1180,232],[1240,200],[1290,185],[1350,188],[1420,198],[1480,185]]).concat(z12([[0,180],[60,150],[120,100],[185,75],[240,105],[320,110],[390,103],[450,125],[530,190],[600,228],[680,230],[760,198],[830,195],[900,170],[970,105],[1020,72],[1100,75],[1190,65],[1250,85],[1300,65],[1390,70],[1450,110],[1518,148]]));
s+=rect(LEFT,533,END-3-LEFT,18,'#d8f4d8')+rect(LEFT,603,END-3-LEFT,17,'#fdd8d8');
s+=fillB(thick,dsh,'#b8b8e6','#e8b8ee',160,1043);
for(let x=160;x<1043;x+=1.5){const a=interp(thick,x),b=interp(dsh,x);const t=Math.min(a,b),m=Math.min(Math.max(a,b),551);if(t<551)s+=rect(x,t.toFixed(1),1.6,(m-t).toFixed(1),'#74c078');}
s+=line(LEFT,533,1043,533,'#111',1)+line(LEFT,551,1043,551,'#111',1)+line(LEFT,603,1043,603,'#111',1);
s+=line(LEFT,577,1043,577,'#1a1ac0',1.3,'stroke-dasharray="3.5 3"');
s+=poly(thin.map(q=>[q[0]+3.5,q[1]+2]),'#555',.8,'stroke-dasharray="2 2"');
s+=segs(thin,(a,b)=>b[1]<a[1]?'#111':'#e02828',1.3);
s+=poly(dsh,'#222',2.4,'stroke-dasharray="5 4"');
s+=segs(thick,(a,b)=>b[1]<=a[1]?'#0a0ab4':'#f01010',3.4);
[[130,187],[225,117],[270,120],[365,84],[505,72],[550,82],[600,78],[645,75],[740,62],[997,268],[1230,115]].forEach(p=>{const q=z8([p])[0];s+=tri(q[0],q[1],false,'#b00000');});
[[155,173],[248,127],[295,110],[435,145],[528,75],[575,85],[622,82],[668,72],[972,276],[1090,285],[1395,220]].forEach(p=>{const q=z8([p])[0];s+=tri(q[0],q[1],true,'#0808c0');});
[[55,67],[120,52],[205,88],[295,175],[385,155],[580,282],[733,72],[905,65],[975,72],[1060,108],[1190,90],[1320,78]].forEach(p=>{const q=z12([p])[0];s+=tri(q[0],q[1],false,'#b00000');});
[[75,65],[185,85],[275,178],[318,160],[558,280],[645,272],[843,117],[955,78],[1040,98],[1105,122],[1258,128],[1497,270]].forEach(p=>{const q=z12([p])[0];s+=tri(q[0],q[1],true,'#0808c0');});
s+=axis([533,551,570,578,597,608,619],524,625);
document.getElementById('p2').innerHTML=s;

/* pane 3: Willy */
let w=grid([632,648,664,681,695],625,701);
const band=(rows,f,c)=>rows.forEach(r=>{const a=f([[r[0],0]])[0][0],b=f([[r[1],0]])[0][0];w+=rect(a.toFixed(1),626,(b-a).toFixed(1),75,c);});
band([[95,118],[210,235],[258,283],[375,398],[868,915],[940,1078],[1198,1265],[1290,1337],[1360,1407],[1452,1478]],z8,'#ffa8a8');
band([[330,355],[422,447],[1172,1197],[1478,1500]],z8,'#62b866');
band([[355,375],[820,845],[1197,1220]],z8,'#c06464');
band([[447,540],[562,587],[633,680],[702,727],[798,820]],z8,'#bcbcf2');
band([[67,87],[153,177],[240,283],[305,328],[395,440],[918,963],[985,1008],[1030,1050],[1072,1138],[1160,1182],[1227,1292],[1335,1357],[1510,1530]],z12,'#bcbcf2');
band([[480,503],[525,568],[590,635],[722,743],[765,810]],z12,'#ffa8a8');
band([[22,45],[460,480],[1445,1467]],z12,'#c06464');
band([[45,67],[875,897],[1488,1510]],z12,'#62b866');
band([[1500,1525]],z8,'#bcbcf2');
const wil=z8([[68,487],[100,490],[130,490],[150,480],[195,463],[225,472],[245,462],[265,465],[290,462],[315,450],[340,432],[365,440],[390,445],[430,425],[460,418],[480,385],[505,383],[525,347],[550,375],[575,337],[600,368],[620,368],[650,345],[670,337],[692,365],[715,337],[738,360],[755,385],[785,430],[810,435],[830,462],[855,440],[880,455],[905,470],[930,457],[1000,470],[1020,490],[1065,497],[1110,490],[1135,478],[1165,435],[1185,430],[1215,432],[1250,452],[1280,445],[1325,463],[1350,440],[1395,472],[1420,447],[1460,443],[1490,422]]).concat(z12([[0,432],[35,437],[55,400],[70,345],[100,338],[122,380],[145,380],[163,345],[187,362],[208,425],[228,430],[272,390],[295,403],[318,352],[345,375],[385,425],[425,402],[465,440],[495,483],[520,473],[555,483],[585,483],[620,492],[645,475],[670,473],[715,452],[735,462],[755,450],[800,475],[825,470],[855,445],[880,430],[905,422],[930,365],[955,345],[975,378],[995,355],[1015,372],[1040,365],[1063,382],[1110,345],[1130,345],[1150,365],[1168,352],[1190,390],[1218,390],[1250,355],[1285,345],[1325,365],[1345,352],[1365,365],[1385,395],[1415,405],[1440,425],[1470,440],[1490,432],[1518,420]]));
for(let x=LEFT;x<1043;x+=1.5){const a=interp(wil,x);if(a<648)w+=rect(x,a.toFixed(1),1.6,(648-a).toFixed(1),'#5a9a78','fill-opacity=".6"');}
w+=line(LEFT,632,1043,632,'#333',1,'stroke-dasharray="3 3"')+line(LEFT,697,1043,697,'#333',1,'stroke-dasharray="3 3"');
w+=line(LEFT,648,1043,648,'#10108c',1.3)+line(LEFT,664,1043,664,'#1010b0',1.3,'stroke-dasharray="4 3"')+line(LEFT,681,1043,681,'#d01818',1.3);
w+=segs(wil,(a,b)=>{const m=(a[1]+b[1])/2;if(m>681)return '#8c0808';if(m<649)return '#10c010';return b[1]<a[1]?'#1010c0':'#ff9a18';},2.8);
[[320,435],[410,435],[1162,435],[1462,435],[1535,437]].forEach(p=>{const q=z8([p])[0];w+=tri(q[0],q[1],true,'#0808c0',5);});
[[340,432],[810,430],[1185,432],[1512,432]].forEach(p=>{const q=z8([p])[0];w+=tri(q[0],q[1],false,'#b00000',5);});
[[33,437],[865,432],[1477,435]].forEach(p=>{const q=z12([p])[0];w+=tri(q[0],q[1],true,'#0808c0',5);});
[[450,432],[1433,432]].forEach(p=>{const q=z12([p])[0];w+=tri(q[0],q[1],false,'#b00000',5);});
w+=axis([632,647,659,668,681,694],625,701);
document.getElementById('p3').innerHTML=w;

/* pane 4: Awesome */
let a=grid([716,737,758,779],701,787);
const ZERO=759;
const mainL=[[190,759],[230,757],[258,749],[285,754],[320,758],[350,760],[375,760],[420,757],[480,756],[515,752],[530,740],[545,725],[565,716],[580,726],[595,738],[622,732],[640,740],[663,755],[680,781],[704,778],[730,765],[745,761]];
const mainR=z9([[0,200],[40,172],[75,155],[100,135],[120,105],[145,95],[180,108],[220,120],[265,148],[290,140],[320,85],[350,72],[375,90],[400,122],[430,135],[460,105],[495,92],[520,95],[570,115],[600,170],[640,230],[685,280],[715,270],[735,255]]);
const mainAll=mainL.concat([[755,759],[796,757]],mainR);
const slowL=[[22,759],[190,759],[258,752],[300,755],[350,758],[420,758],[500,756],[530,748],[555,735],[590,725],[625,722],[660,740],[700,768],[740,765],[760,765]].concat(z9([[0,225],[70,205],[130,160],[200,125],[260,132],[300,128],[360,85],[400,65],[470,78],[540,52],[565,52],[620,95],[680,175],[735,205]]));
for(let i=-5;i<=123;i++){const x=X(2016,i);const m=interp(mainAll,x),p=interp(mainAll,x-7.81),l=interp(slowL,x);
  if(l<ZERO)a+=rect(x-3,l.toFixed(1),6,(ZERO-l).toFixed(1),l<m?'#fcd0d0':'#d8f8d8');
  if(m<ZERO)a+=rect(x-3,m.toFixed(1),6,(ZERO-m).toFixed(1),m<=p?'#1212e0':'#ff00e8');
  else if(m>ZERO)a+=rect(x-3,ZERO,6,(m-ZERO).toFixed(1),m>=p?'#f01010':'#008c90');
}
a+=line(LEFT,ZERO,1043,ZERO,'#1414d8',2.4);
[[22,70,'#6aa060'],[70,112,'#ff9a18'],[112,150,'#50c878'],[190,236,'#ff9a18'],[345,365,'#ff9a18'],[410,440,'#50c878']].forEach(r=>a+=line(r[0],ZERO,r[1],ZERO,r[2],2.4));
a+=segs(slowL.filter(q=>q[0]>=190),(p,q)=>q[1]<=p[1]?'#70f070':'#ff9410',2.6);
a+=segs(mainL.slice(0,10),(p,q)=>q[1]<=p[1]?'#10103c':'#b000b0',2);
a+=segs(mainL.slice(9),(p,q)=>q[1]<=p[1]?'#10103c':'#b000b0',3);
a+=segs(mainR,(p,q)=>q[1]<=p[1]?'#10103c':'#b000b0',3);
[[584,731],[273,752],[418,755],[871,730],[925,719]].forEach(p=>a+=tri(p[0],p[1],false,'#f0f000',4));
[[58,758],[388,757],[454,757],[473,757],[902,729]].forEach(p=>a+=tri(p[0],p[1],true,'#10e0f0',4));
a+=axis([716,737,757,765,781],701,787);
document.getElementById('p4').innerHTML=a;

/* pane 5: market force */
let f=grid([811],787,833);
[[22,55,'y'],[55,79,'g'],[79,109,'y'],[109,133,'g'],[133,157,'y'],[157,289,'g'],[289,384,'y'],[384,438,'g'],[438,461,'y'],[461,476,'g'],[476,516,'y'],[516,641,'g'],[641,671,'y'],[671,680,'g'],[680,790,'y'],[790,804,'g'],[804,813,'y'],[813,953,'g'],[953,984,'y'],[984,1000,'g'],[1000,1008,'y'],[1008,1023,'g'],[1023,1046,'y']].forEach(b=>f+=rect(b[0],787,b[1]-b[0],46,b[2]=='y'?'#ffff88':'#40ff40'));
f+=line(LEFT,811,1042,811,'#333',1.2);
f+=axis([791,811,829],787,833);
document.getElementById('p5').innerHTML=f;
</script>
</body>
</html>
